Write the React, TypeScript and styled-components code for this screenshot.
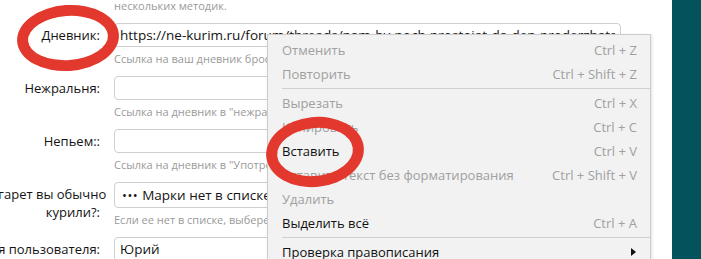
import React from 'react';
import styled, { createGlobalStyle } from 'styled-components';

const GlobalStyle = createGlobalStyle`
  html, body {
    margin: 0;
    padding: 0;
    background: #fff;
    overflow: hidden;
  }
  body {
    font-family: "Open Sans", "Noto Sans", "Liberation Sans", sans-serif;
  }
`;

const Page = styled.div`
  position: relative;
  display: flex;
  width: 701px;
  height: 259px;
  overflow: hidden;
`;

const Content = styled.div`
  flex: 1;
  overflow: hidden;
`;

const Sidebar = styled.div`
  width: 29px;
  background: #02535b;
`;

const Form = styled.div`
  display: grid;
  grid-template-columns: 200px 507px;
  column-gap: 14px;
  margin: -17px 0 0 -100px;
`;

const Label = styled.label`
  text-align: right;
  font-size: 13px;
  line-height: 18px;
  color: #141414;
  padding-top: 3px;
  white-space: nowrap;
`;

const Field = styled.div`
  display: flex;
  flex-direction: column;
  padding-bottom: 10px;
`;

const Hint = styled.div<{ $top?: boolean }>`
  font-size: 11px;
  line-height: 15px;
  color: #9a9a9a;
  margin-top: ${(p) => (p.$top ? '0' : '4px')};
  white-space: nowrap;
  overflow: hidden;
`;

const TextInput = styled.input`
  box-sizing: border-box;
  width: 100%;
  height: 24px;
  border: 1px solid #cfcfcf;
  border-radius: 4px;
  padding: 0 5px;
  font-family: inherit;
  font-size: 13.5px;
  color: #141414;
  background: #fff;
  outline: none;
`;

const SelectBox = styled.div`
  box-sizing: border-box;
  height: 26px;
  border: 1px solid #cfcfcf;
  border-radius: 4px;
  padding: 0 7px;
  display: flex;
  align-items: center;
  font-size: 13.5px;
  color: #141414;
  white-space: nowrap;
  overflow: hidden;
`;

const Dots = styled.span`
  font-size: 13px;
  letter-spacing: 0.5px;
  margin-right: 4px;
`;

const Menu = styled.ul`
  position: absolute;
  left: 267px;
  top: 34px;
  width: 384px;
  margin: 0;
  padding: 3px 0 20px;
  list-style: none;
  box-sizing: border-box;
  background: #f2f2f2;
  border: 1px solid #cccccc;
  box-shadow: 1px 1px 3px rgba(0, 0, 0, 0.12);
  font-size: 13px;
`;

const MenuItem = styled.li<{ $disabled?: boolean }>`
  display: flex;
  align-items: center;
  justify-content: space-between;
  height: 24px;
  padding: 0 13px 0 14px;
  color: ${(p) => (p.$disabled ? '#a0a0a0' : '#111')};
`;

const Shortcut = styled.span`
  color: #a0a0a0;
`;

const Arrow = styled.span`
  width: 0;
  height: 0;
  margin-right: 1px;
  border-top: 4px solid transparent;
  border-bottom: 4px solid transparent;
  border-left: 5px solid #111;
`;

const Separator = styled.li`
  height: 1px;
  margin: 2px 0 2px 14px;
  background: #d0d0d0;
`;

const Ring = styled.div<{ $x: number; $y: number; $w: number; $h: number; $r: number }>`
  position: absolute;
  left: ${(p) => p.$x}px;
  top: ${(p) => p.$y}px;
  width: ${(p) => p.$w}px;
  height: ${(p) => p.$h}px;
  box-sizing: border-box;
  border: 11px solid #e2382d;
  border-radius: 50%;
  transform: rotate(${(p) => p.$r}deg);
  pointer-events: none;
`;

type Row = {
  label: React.ReactNode;
  value?: string;
  hint?: string;
  select?: boolean;
};

const rows: Row[] = [
  {
    label: 'Дневник:',
    value: 'https://ne-kurim.ru/forum/threads/nam-by-noch-prostojat-da-den-proderzhatsia.55093/',
    hint: 'Ссылка на ваш дневник бросания курения на нашем форуме.',
  },
  { label: 'Нежральня:', value: '', hint: 'Ссылка на дневник в "нежральне" (если есть).' },
  { label: 'Непьем::', value: '', hint: 'Ссылка на дневник в "Употреблении алкоголя" (если есть).' },
  {
    label: (
      <>
        Какие марки сигарет вы обычно
        <br />
        курили?:
      </>
    ),
    select: true,
    hint: 'Если ее нет в списке, выберете "Марки нет в списке".',
  },
  { label: 'Имя пользователя:', value: 'Юрий' },
];

type Item = { text: string; keys?: string; disabled?: boolean; sub?: boolean } | 'sep';

const items: Item[] = [
  { text: 'Отменить', keys: 'Ctrl + Z', disabled: true },
  { text: 'Повторить', keys: 'Ctrl + Shift + Z', disabled: true },
  'sep',
  { text: 'Вырезать', keys: 'Ctrl + X', disabled: true },
  { text: 'Копировать', keys: 'Ctrl + C', disabled: true },
  { text: 'Вставить', keys: 'Ctrl + V' },
  { text: 'Вставить текст без форматирования', keys: 'Ctrl + Shift + V', disabled: true },
  { text: 'Удалить', disabled: true },
  { text: 'Выделить всё', keys: 'Ctrl + A' },
  'sep',
  { text: 'Проверка правописания', sub: true },
];

export default function App() {
  return (
    <Page>
      <GlobalStyle />
      <Content>
        <Form>
          <span />
          <Field>
            <Hint $top>
              Бросить курить можно с помощью одной или
              <br />
              нескольких методик.
            </Hint>
          </Field>
          {rows.map((r, i) => (
            <React.Fragment key={i}>
              <Label>{r.label}</Label>
              <Field>
                {r.select ? (
                  <SelectBox>
                    <Dots>•••</Dots>Марки нет в списке
                  </SelectBox>
                ) : (
                  <TextInput readOnly value={r.value} />
                )}
                {r.hint && <Hint>{r.hint}</Hint>}
              </Field>
            </React.Fragment>
          ))}
        </Form>
      </Content>
      <Sidebar />
      <Menu>
        {items.map((it, i) =>
          it === 'sep' ? (
            <Separator key={i} />
          ) : (
            <MenuItem key={i} $disabled={it.disabled}>
              <span>{it.text}</span>
              {it.keys && <Shortcut>{it.keys}</Shortcut>}
              {it.sub && <Arrow />}
            </MenuItem>
          )
        )}
      </Menu>
      <Ring $x={17} $y={5} $w={102} $h={66} $r={-4} />
      <Ring $x={266} $y={117} $w={98} $h={70} $r={-6} />
    </Page>
  );
}
